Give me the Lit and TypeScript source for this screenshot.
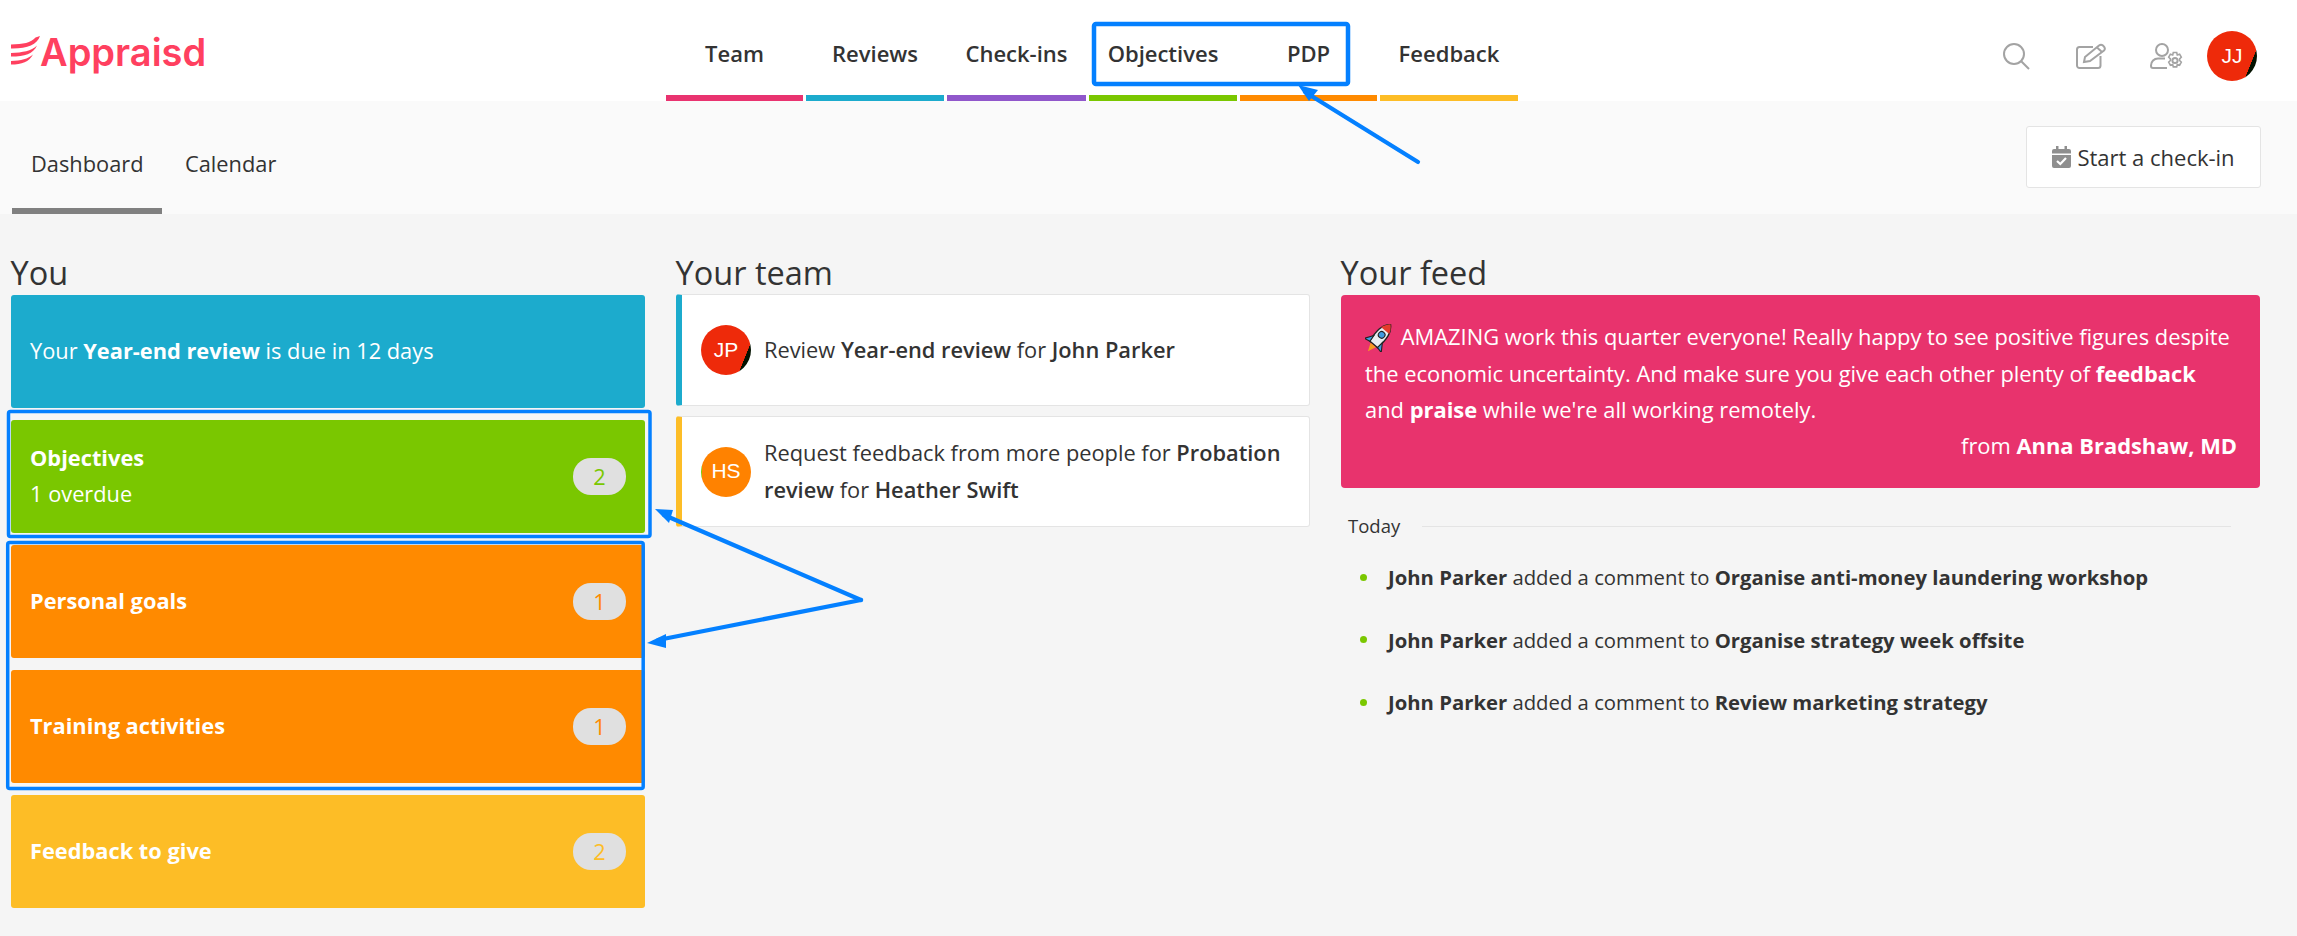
import { LitElement, html, css, svg } from "lit";
import { customElement } from "lit/decorators.js";

const NAV = [
  ["Team", 137, "#e93370"],
  ["Reviews", 138, "#1cabcd"],
  ["Check-ins", 139, "#9057cb"],
  ["Objectives", 148, "#7ac700"],
  ["PDP", 137, "#ff8a00"],
  ["Feedback", 138, "#fdbd26"],
] as const;

const FEED = [
  "Organise anti-money laundering workshop",
  "Organise strategy week offsite",
  "Review marketing strategy",
];

@customElement("app-root")
export class AppRoot extends LitElement {
  static styles = css`
    :host {
      display: block;
      position: relative;
      width: 2297px;
      height: 936px;
      overflow: hidden;
      background: #f5f5f5;
      color: #333;
      font-family: "Open Sans", "Liberation Sans", sans-serif;
    }
    * { box-sizing: border-box; }
    .top {
      height: 101px;
      background: #fff;
      display: grid;
      grid-template-columns: 666px auto 1fr;
    }
    .logo { display: flex; align-items: center; padding: 0 0 0 11px; height: 101px; }
    .logo svg { width: 29px; height: 30px; }
    .logo span {
      font-family: Inter, "Liberation Sans", sans-serif;
      font-weight: 600;
      font-size: 38px;
      color: #ff405f;
      line-height: 1;
      margin-top: 3px;
    }
    nav { display: flex; gap: 3px; }
    .nav-item {
      height: 101px;
      border-bottom: 6px solid;
      display: flex;
      align-items: center;
      justify-content: center;
      padding-top: 10px;
      font-size: 22px;
      font-weight: 600;
      color: #333;
    }
    .tools {
      display: flex;
      align-items: center;
      justify-content: flex-end;
      padding: 11px 40px 0 0;
      height: 101px;
    }
    .tools svg { display: block; fill: none; stroke: #a3a3a3; stroke-width: 2; }
    .i-search { width: 27px; height: 27px; margin-right: 46px; }
    .i-edit { width: 30px; height: 26px; margin-right: 44px; }
    .i-user { width: 33px; height: 26px; margin-right: 24px; }
    .avatar {
      width: 50px;
      height: 50px;
      flex: none;
      border-radius: 50%;
      display: flex;
      align-items: center;
      justify-content: center;
      color: #fff;
      font-family: "Liberation Sans", Arial, sans-serif;
      font-size: 21px;
      background: linear-gradient(112deg, #ee2a0a 81%, #041200 81.5%);
    }
    .avatar.orange { background: linear-gradient(90deg, #7ac700 1%, #ff8200 3%); }
    .sub {
      height: 113px;
      background: #fafafa;
      display: flex;
      justify-content: space-between;
      padding: 0 36px 0 12px;
    }
    .tabs { display: flex; }
    .tab {
      height: 113px;
      padding: 18px 20px 0 19px;
      display: flex;
      align-items: center;
      font-size: 21.8px;
      color: #333;
      border-bottom: 6px solid transparent;
    }
    .tab.on { border-bottom-color: #808080; width: 150px; margin-right: 4px; }
    .btn {
      margin-top: 25px;
      width: 235px;
      height: 62px;
      background: #fff;
      border: 1px solid #e4e4e4;
      border-radius: 3px;
      display: flex;
      align-items: center;
      justify-content: center;
      gap: 6px;
      font-size: 22px;
      color: #333;
    }
    .btn svg { width: 19px; height: 22px; margin-top: -1px; }
    .grid {
      display: grid;
      grid-template-columns: 634px 634px 919px;
      gap: 31px;
      padding: 39px 0 0 11px;
    }
    h2 {
      margin: 0 0 0 -0.5px;
      font-size: 32.5px;
      font-weight: 500;
      line-height: 40px;
      height: 42px;
      color: #333;
    }
    .stack { display: flex; flex-direction: column; gap: 12px; }
    .stack.team { gap: 10px; margin-top: -1px; }
    .tile {
      height: 113px;
      border-radius: 3px;
      color: #fff;
      padding: 0 19px;
      display: flex;
      align-items: center;
      justify-content: space-between;
      font-size: 21.8px;
    }
    .tile b { font-weight: 700; }
    .tile .two { line-height: 36px; margin-top: -2px; }
    .badge {
      width: 53px;
      height: 37px;
      border-radius: 18px;
      background: #e0e0e0;
      display: flex;
      align-items: center;
      justify-content: center;
      font-size: 21.8px;
    }
    .blue { background: #1cabcd; }
    .green { background: #7ac700; }
    .orange-t { background: #ff8a00; }
    .yellow { background: #fdbd26; }
    .task {
      background: #fff;
      border: 1px solid #e4e4e4;
      border-left: 6px solid;
      border-radius: 3px;
      display: flex;
      align-items: center;
      gap: 13px;
      padding-left: 19px;
      padding-right: 20px;
      font-size: 21.8px;
      line-height: 36.6px;
    }
    .task b { font-weight: 600; }
    .task.a { height: 112px; border-left-color: #1cabcd; }
    .task.b { height: 111px; border-left-color: #fdbd26; }
    .pink {
      height: 193px;
      background: #e8336d;
      border-radius: 4px;
      color: #fff;
      padding: 24px 23px 0 24px;
      font-size: 21.9px;
      line-height: 36.6px;
    }
    .pink b { font-weight: 700; }
    .pink svg { width: 28px; height: 28px; vertical-align: -7px; margin-right: 2px; }
    .msg { max-width: 868px; }
    .from { text-align: right; margin-top: -1px; }
    .day {
      display: flex;
      align-items: center;
      gap: 22px;
      margin: 22px 29px 2px 7px;
      height: 30px;
      font-size: 18.5px;
      font-weight: 500;
    }
    .day i { flex: 1; height: 1px; background: #e4e4e4; margin-top: 2px; }
    .feed { margin: 0; padding: 4px 0 0 0; list-style: none; }
    .feed li {
      height: 62.5px;
      display: flex;
      align-items: center;
      font-size: 20.3px;
      padding-left: 19px;
      white-space: pre;
    }
    .feed li::before {
      content: "";
      width: 7px;
      height: 7px;
      border-radius: 50%;
      background: #7ac700;
      margin-right: 21px;
      flex: none;
    }
    .feed b { font-weight: 700; }
    .notes { position: absolute; inset: 0; width: 2297px; height: 936px; pointer-events: none; }
  `;

  private tile(cls: string, title: string, n: number, color: string, sub = "") {
    return html`<div class="tile ${cls}">
      <div class="two"><b>${title}</b>${sub ? html`<br />${sub}` : ""}</div>
      <span class="badge" style="color:${color}">${n}</span>
    </div>`;
  }

  render() {
    return html`
      <header class="top">
        <div class="logo">
          <svg viewBox="0 0 29 30">
            <path fill="#ff405f" d="M29 0 L24.5 1.5 C20 7 12 8 0 8.5 L0 12.5 C16 12.8 26 9 29 0Z" />
            <path fill="#ff405f" d="M26 9.5 C20 15 12 16.5 0 17 L0 20.5 C14 20.5 22 18 26 9.5Z" />
            <path fill="#ff405f" d="M22 18.5 C17 23 10 24.5 0 25 L0 28.5 C11 28.5 18 26 22 18.5Z" />
          </svg>
          <span>Appraisd</span>
        </div>
        <nav>
          ${NAV.map(
            ([t, w, c]) =>
              html`<div class="nav-item" style="width:${w}px;border-bottom-color:${c}">${t}</div>`
          )}
        </nav>
        <div class="tools">
          <svg class="i-search" viewBox="0 0 27 27">
            <circle cx="11" cy="11" r="10" />
            <path d="M18.2 18.2 L26 26" />
          </svg>
          <svg class="i-edit" viewBox="0 0 30 26">
            <path d="M17 4 H3.5 A2.5 2.5 0 0 0 1 6.5 V22.5 A2.5 2.5 0 0 0 3.5 25 H22 A2.5 2.5 0 0 0 24.5 22.5 V13" />
            <path d="M8 19 L9 14 L23 2.5 Q25 1 27 2.5 L28.3 4 Q29.5 6 28 7.5 L14 18 Z" />
            <path d="M21 4.5 L26 9" />
          </svg>
          <svg class="i-user" viewBox="0 0 33 26">
            <circle cx="12" cy="7" r="6" />
            <path d="M15 15.5 H8 A7 7 0 0 0 1 22.5 V23 A2 2 0 0 0 3 25 H17" />
            <circle cx="25" cy="17.5" r="2.6" />
            <path d="M23.3 9.5 h3.4 l.6 2.4 2.3-.7 1.7 3-1.7 1.7 v1.6 l1.7 1.7-1.7 3-2.3-.7-.6 2.4 h-3.4 l-.6-2.4-2.3.7-1.7-3 1.7-1.7 v-1.6 l-1.7-1.7 1.7-3 2.3.7z" stroke-width="1.6" />
          </svg>
          <div class="avatar">JJ</div>
        </div>
      </header>

      <section class="sub">
        <div class="tabs">
          <div class="tab on">Dashboard</div>
          <div class="tab">Calendar</div>
        </div>
        <div class="btn">
          <svg viewBox="0 0 19 22">
            <path fill="#8f8f8f" d="M4 0 h2.5 v3 h6 v-3 H15 v3 h2 a2 2 0 0 1 2 2 v2.5 H0 V5 a2 2 0 0 1 2-2 h2z M0 9 h19 v11 a2 2 0 0 1-2 2 H2 a2 2 0 0 1-2-2z" />
            <path fill="none" stroke="#fff" stroke-width="2.2" d="M5 15 L8.3 18 L14 12" />
          </svg>
          Start a check-in
        </div>
      </section>

      <main class="grid">
        <div>
          <h2>You</h2>
          <div class="stack">
            <div class="tile blue"><div class="two">Your <b>Year-end review</b> is due in 12 days</div></div>
            ${this.tile("green", "Objectives", 2, "#7ac700", "1 overdue")}
            ${this.tile("orange-t", "Personal goals", 1, "#ff8a00")}
            ${this.tile("orange-t", "Training activities", 1, "#ff8a00")}
            ${this.tile("yellow", "Feedback to give", 2, "#fdbd26")}
          </div>
        </div>
        <div>
          <h2>Your team</h2>
          <div class="stack team">
            <div class="task a">
              <div class="avatar">JP</div>
              <div>Review <b>Year-end review</b> for <b>John Parker</b></div>
            </div>
            <div class="task b">
              <div class="avatar orange">HS</div>
              <div>Request feedback from more people for <b>Probation review</b> for <b>Heather Swift</b></div>
            </div>
          </div>
        </div>
        <div>
          <h2>Your feed</h2>
          <div class="pink">
            <div class="msg">
              <svg viewBox="0 0 26 26">
                <g transform="rotate(40 13 13) translate(-3.6 -3.6) scale(1.28)">
                  <path fill="#e9edf0" stroke="#222" stroke-width="1" d="M13 0 C17.5 4 18 10 16.8 19 H9.2 C8 10 8.5 4 13 0Z" />
                  <path fill="#e53b2c" d="M13 0 C15 1.8 16.2 4 16.8 6 H9.2 C9.8 4 11 1.8 13 0Z" />
                  <circle cx="13" cy="10" r="2.4" fill="#3f9be0" stroke="#222" stroke-width=".8" />
                  <path fill="#3f9be0" stroke="#222" stroke-width=".8" d="M9 14 L5 20 L9.4 19Z M17 14 L21 20 L16.6 19Z" />
                  <path fill="#f59a1f" d="M10.5 19.5 H15.5 L13 25.5Z" />
                </g>
              </svg>
              AMAZING work this quarter everyone! Really happy to see positive figures despite the economic uncertainty. And make sure you give each other plenty of <b>feedback</b> and <b>praise</b> while we're all working remotely.
            </div>
            <div class="from">from <b>Anna Bradshaw, MD</b></div>
          </div>
          <div class="day"><span>Today</span><i></i></div>
          <ul class="feed">
            ${FEED.map((f) => html`<li><b>John Parker</b> added a comment to <b>${f}</b></li>`)}
          </ul>
        </div>
      </main>

      <svg class="notes" viewBox="0 0 2297 936">
        ${svg`
          <g fill="none" stroke="#0480ff" stroke-linejoin="round">
            <rect x="1094" y="24" width="254" height="60" rx="2" stroke-width="4.5" />
            <rect x="8.5" y="411.5" width="641.5" height="125" rx="2" stroke-width="3.5" />
            <rect x="7.7" y="542.5" width="635.5" height="246" rx="2" stroke-width="3.5" />
          </g>
          <g fill="none" stroke="#0480ff" stroke-width="4.2" stroke-linecap="round">
            <path d="M1418 162 L1305 92" />
            <path d="M861 600 L664 515" />
            <path d="M861 600 L658 640" />
          </g>
          <g fill="#0480ff">
            <path d="M1298 85 L1318 90 L1309 101Z" />
            <path d="M655 509 L673 510 L669 523Z" />
            <path d="M647 643 L666 634 L666 648Z" />
          </g>
        `}
      </svg>
    `;
  }
}
